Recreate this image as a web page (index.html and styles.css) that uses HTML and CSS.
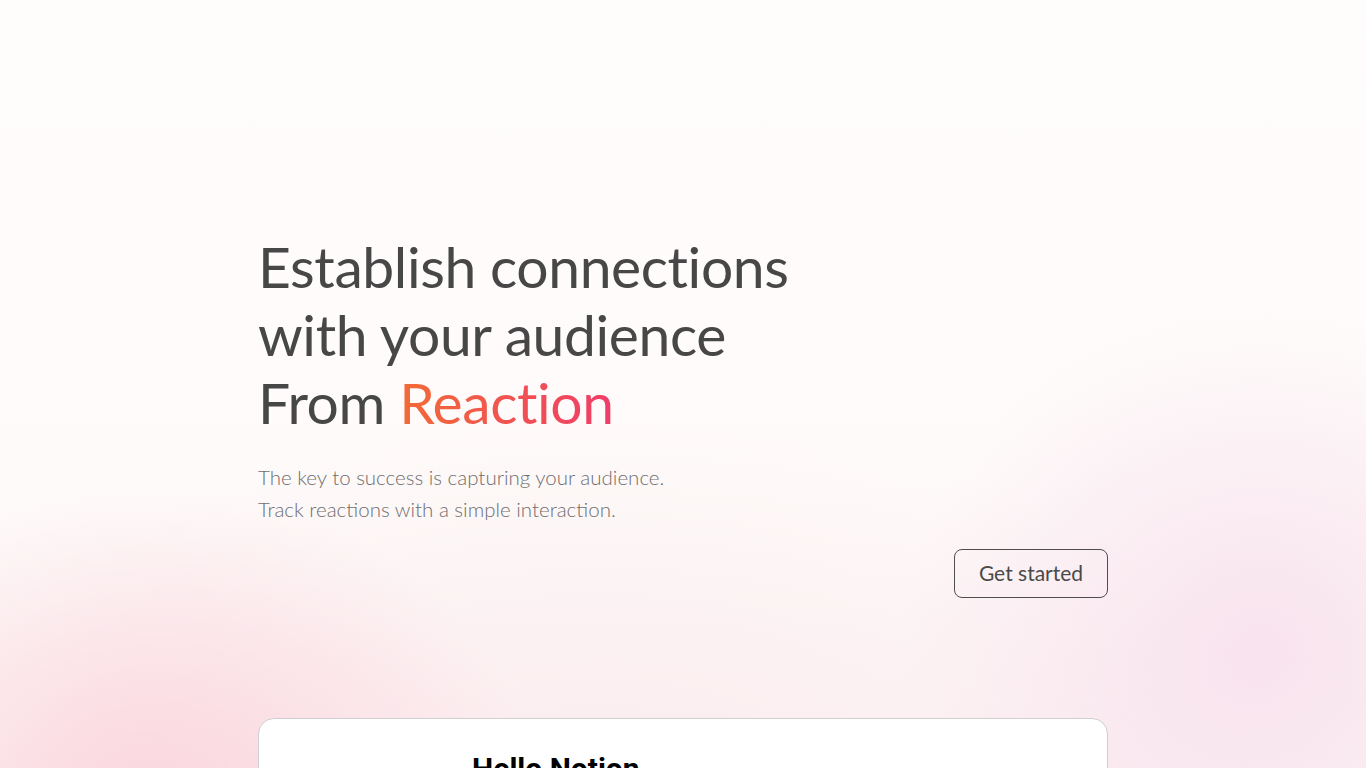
FILE: index.html
```html
<!DOCTYPE html>
<html lang="en">
<head>
<meta charset="utf-8">
<title>Reaction</title>
<link rel="stylesheet" href="styles.css">
</head>
<body>
<div class="bg">
  <main class="container">
    <section class="hero">
      <h1 class="title">Establish connections<br>with your audience<br>From <span class="accent">Reaction</span></h1>
      <p class="lead">The key to success is capturing your audience.<br>Track reactions with a simple interaction.</p>
      <div class="actions">
        <a class="btn" href="#">Get started</a>
      </div>
    </section>
    <section class="card">
      <h2 class="card-title">Hello Notion</h2>
    </section>
  </main>
</div>
</body>
</html>
```
FILE: styles.css
```css
html, body {
  margin: 0;
  padding: 0;
}
body {
  font-family: Lato, "Noto Sans", sans-serif;
  color: #474747;
  overflow: hidden;
  height: 768px;
}
.bg {
  min-height: 768px;
  background:
    radial-gradient(ellipse 380px 300px at 150px 790px, rgba(250, 205, 215, 0.75), rgba(250, 205, 215, 0) 100%),
    radial-gradient(ellipse 360px 340px at 1260px 650px, rgba(245, 215, 232, 0.65), rgba(245, 215, 232, 0) 100%),
    radial-gradient(ellipse 700px 380px at 600px 800px, rgba(248, 222, 228, 0.45), rgba(248, 222, 228, 0) 100%),
    linear-gradient(180deg, #fffdfc 0%, #fefbfa 45%, #fcf3f4 100%);
}
.container {
  width: 850px;
  margin: 0 auto;
  padding-top: 232px;
}
.title {
  margin: 0;
  font-weight: 400;
  font-size: 57px;
  line-height: 68px;
  color: #474747;
  letter-spacing: -0.4px;
}
.accent {
  background: linear-gradient(90deg, #f26b36 0%, #ef3d6a 100%);
  -webkit-background-clip: text;
  background-clip: text;
  color: transparent;
}
.lead {
  margin: 25px 0 0;
  font-weight: 300;
  font-size: 20.5px;
  line-height: 32px;
  color: #6e6e6e;
}
.actions {
  display: flex;
  justify-content: flex-end;
  margin-top: 24px;
}
.btn {
  display: inline-flex;
  align-items: center;
  justify-content: center;
  width: 152px;
  height: 47px;
  padding-bottom: 3px;
  box-sizing: content-box;
  height: 44px;
  border: 1px solid #4e4e4e;
  border-radius: 8px;
  font-size: 21px;
  color: #4a4a4a;
  text-decoration: none;
}
.card {
  margin-top: 120px;
  background: #fff;
  border: 1px solid #cfcfcf;
  border-radius: 16px;
  height: 200px;
  padding: 32px 0 0 213px;
  box-sizing: border-box;
}
.card-title {
  margin: 0;
  font-family: Roboto, "Liberation Sans", sans-serif;
  font-weight: 700;
  font-size: 30px;
  color: #000;
}
```
